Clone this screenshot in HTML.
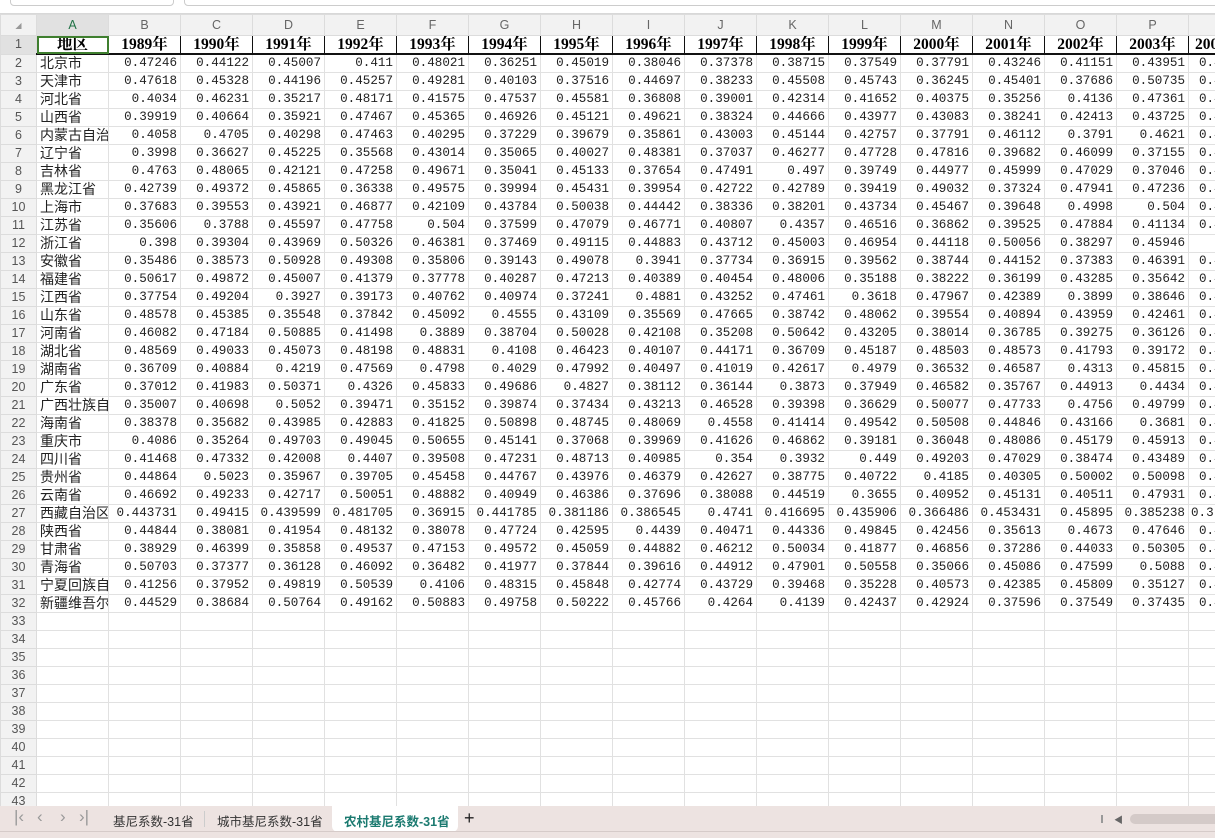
<!DOCTYPE html>
<html><head><meta charset="utf-8"><style>
*{margin:0;padding:0;box-sizing:border-box}
body{width:1215px;height:838px;overflow:hidden;background:#fff;position:relative;font-family:"Liberation Sans","Noto Sans CJK SC",sans-serif}
.top{position:absolute;left:0;top:0;width:1215px;height:14px;background:#fff;border-bottom:1px solid #d8d8d8}
.box{position:absolute;top:-8px;height:14px;border:1px solid #ccc;border-radius:4px;background:#fff}
table{position:absolute;left:0;top:14px;border-collapse:collapse;table-layout:fixed;width:1260px}
td{height:18px;border:1px solid #e1e1e1;font-family:"Liberation Mono",monospace;font-size:12.6px;color:#222;text-align:right;padding:0 3px 0 0;white-space:nowrap;overflow:hidden;line-height:17px}
tr.h td{height:21px;background:#f2f2f2;color:#666;text-align:center;font-family:"Liberation Sans",sans-serif;font-size:12.5px;padding:0;border-color:#dcdcdc}
tr.h td.sel{background:#e1e1e1;color:#217346}
td.rh{background:#f2f2f2;color:#555;text-align:center;font-family:"Liberation Sans",sans-serif;font-size:12.5px;padding:0;border-color:#dcdcdc}
td.rh.sel{background:#e1e1e1}
td.n{text-align:left;font-family:"Liberation Sans","Noto Sans CJK SC",sans-serif;font-size:14px;padding:0 0 0 3px;overflow:hidden}
tr.r1 td{font-family:"Liberation Serif","Noto Serif CJK SC",serif;font-weight:bold;font-size:15.5px;text-align:center;color:#000;border-top:1px solid #e1e1e1;border-bottom:2px solid #111;border-right:1px solid #111;padding:0;line-height:17px}
tr.r1 td.rh{font-family:"Liberation Sans",sans-serif;font-weight:normal;font-size:12.5px;color:#555;border-right:1px solid #dcdcdc;border-bottom:1px solid #dcdcdc}
tr.r1 td.a{outline:2px solid #3f7f2f;outline-offset:-2px}
td.q{text-align:left;padding-left:10px}
.tabs{position:absolute;left:0;top:806px;width:1215px;height:26px;background:#ede3e1}
.bot{position:absolute;left:0;top:831px;width:1215px;height:7px;background:#ede3e1;border-top:1px solid #d6cbc9}
.t{position:absolute;top:5px;font-size:12.5px;color:#333;font-family:"Liberation Sans","Noto Sans CJK SC",sans-serif}
.nav{position:absolute;top:1px;color:#999;font-size:17px}
</style></head><body>
<div class="top"><div class="box" style="left:10px;width:164px"></div><div class="box" style="left:184px;width:1040px"></div></div>
<table>
<colgroup><col style="width:36px"><col style="width:72px"><col style="width:72px"><col style="width:72px"><col style="width:72px"><col style="width:72px"><col style="width:72px"><col style="width:72px"><col style="width:72px"><col style="width:72px"><col style="width:72px"><col style="width:72px"><col style="width:72px"><col style="width:72px"><col style="width:72px"><col style="width:72px"><col style="width:72px"><col style="width:72px"></colgroup>
<tr class="h"><td style="color:#999;font-size:8px">◢</td><td class="sel">A</td><td>B</td><td>C</td><td>D</td><td>E</td><td>F</td><td>G</td><td>H</td><td>I</td><td>J</td><td>K</td><td>L</td><td>M</td><td>N</td><td>O</td><td>P</td><td>Q</td></tr>
<tr class="r1"><td class="rh sel">1</td><td class="a">地区</td><td>1989年</td><td>1990年</td><td>1991年</td><td>1992年</td><td>1993年</td><td>1994年</td><td>1995年</td><td>1996年</td><td>1997年</td><td>1998年</td><td>1999年</td><td>2000年</td><td>2001年</td><td>2002年</td><td>2003年</td><td style="text-align:left;padding-left:6px">2004年</td></tr>
<tr><td class="rh">2</td><td class="n">北京市</td><td>0.47246</td><td>0.44122</td><td>0.45007</td><td>0.411</td><td>0.48021</td><td>0.36251</td><td>0.45019</td><td>0.38046</td><td>0.37378</td><td>0.38715</td><td>0.37549</td><td>0.37791</td><td>0.43246</td><td>0.41151</td><td>0.43951</td><td class="q">0.41</td></tr>
<tr><td class="rh">3</td><td class="n">天津市</td><td>0.47618</td><td>0.45328</td><td>0.44196</td><td>0.45257</td><td>0.49281</td><td>0.40103</td><td>0.37516</td><td>0.44697</td><td>0.38233</td><td>0.45508</td><td>0.45743</td><td>0.36245</td><td>0.45401</td><td>0.37686</td><td>0.50735</td><td class="q">0.41</td></tr>
<tr><td class="rh">4</td><td class="n">河北省</td><td>0.4034</td><td>0.46231</td><td>0.35217</td><td>0.48171</td><td>0.41575</td><td>0.47537</td><td>0.45581</td><td>0.36808</td><td>0.39001</td><td>0.42314</td><td>0.41652</td><td>0.40375</td><td>0.35256</td><td>0.4136</td><td>0.47361</td><td class="q">0.41</td></tr>
<tr><td class="rh">5</td><td class="n">山西省</td><td>0.39919</td><td>0.40664</td><td>0.35921</td><td>0.47467</td><td>0.45365</td><td>0.46926</td><td>0.45121</td><td>0.49621</td><td>0.38324</td><td>0.44666</td><td>0.43977</td><td>0.43083</td><td>0.38241</td><td>0.42413</td><td>0.43725</td><td class="q">0.41</td></tr>
<tr><td class="rh">6</td><td class="n">内蒙古自治</td><td>0.4058</td><td>0.4705</td><td>0.40298</td><td>0.47463</td><td>0.40295</td><td>0.37229</td><td>0.39679</td><td>0.35861</td><td>0.43003</td><td>0.45144</td><td>0.42757</td><td>0.37791</td><td>0.46112</td><td>0.3791</td><td>0.4621</td><td class="q">0.41</td></tr>
<tr><td class="rh">7</td><td class="n">辽宁省</td><td>0.3998</td><td>0.36627</td><td>0.45225</td><td>0.35568</td><td>0.43014</td><td>0.35065</td><td>0.40027</td><td>0.48381</td><td>0.37037</td><td>0.46277</td><td>0.47728</td><td>0.47816</td><td>0.39682</td><td>0.46099</td><td>0.37155</td><td class="q">0.41</td></tr>
<tr><td class="rh">8</td><td class="n">吉林省</td><td>0.4763</td><td>0.48065</td><td>0.42121</td><td>0.47258</td><td>0.49671</td><td>0.35041</td><td>0.45133</td><td>0.37654</td><td>0.47491</td><td>0.497</td><td>0.39749</td><td>0.44977</td><td>0.45999</td><td>0.47029</td><td>0.37046</td><td class="q">0.41</td></tr>
<tr><td class="rh">9</td><td class="n">黑龙江省</td><td>0.42739</td><td>0.49372</td><td>0.45865</td><td>0.36338</td><td>0.49575</td><td>0.39994</td><td>0.45431</td><td>0.39954</td><td>0.42722</td><td>0.42789</td><td>0.39419</td><td>0.49032</td><td>0.37324</td><td>0.47941</td><td>0.47236</td><td class="q">0.41</td></tr>
<tr><td class="rh">10</td><td class="n">上海市</td><td>0.37683</td><td>0.39553</td><td>0.43921</td><td>0.46877</td><td>0.42109</td><td>0.43784</td><td>0.50038</td><td>0.44442</td><td>0.38336</td><td>0.38201</td><td>0.43734</td><td>0.45467</td><td>0.39648</td><td>0.4998</td><td>0.504</td><td class="q">0.41</td></tr>
<tr><td class="rh">11</td><td class="n">江苏省</td><td>0.35606</td><td>0.3788</td><td>0.45597</td><td>0.47758</td><td>0.504</td><td>0.37599</td><td>0.47079</td><td>0.46771</td><td>0.40807</td><td>0.4357</td><td>0.46516</td><td>0.36862</td><td>0.39525</td><td>0.47884</td><td>0.41134</td><td class="q">0.41</td></tr>
<tr><td class="rh">12</td><td class="n">浙江省</td><td>0.398</td><td>0.39304</td><td>0.43969</td><td>0.50326</td><td>0.46381</td><td>0.37469</td><td>0.49115</td><td>0.44883</td><td>0.43712</td><td>0.45003</td><td>0.46954</td><td>0.44118</td><td>0.50056</td><td>0.38297</td><td>0.45946</td><td class="q">&nbsp;&nbsp;&nbsp;0</td></tr>
<tr><td class="rh">13</td><td class="n">安徽省</td><td>0.35486</td><td>0.38573</td><td>0.50928</td><td>0.49308</td><td>0.35806</td><td>0.39143</td><td>0.49078</td><td>0.3941</td><td>0.37734</td><td>0.36915</td><td>0.39562</td><td>0.38744</td><td>0.44152</td><td>0.37383</td><td>0.46391</td><td class="q">0.41</td></tr>
<tr><td class="rh">14</td><td class="n">福建省</td><td>0.50617</td><td>0.49872</td><td>0.45007</td><td>0.41379</td><td>0.37778</td><td>0.40287</td><td>0.47213</td><td>0.40389</td><td>0.40454</td><td>0.48006</td><td>0.35188</td><td>0.38222</td><td>0.36199</td><td>0.43285</td><td>0.35642</td><td class="q">0.41</td></tr>
<tr><td class="rh">15</td><td class="n">江西省</td><td>0.37754</td><td>0.49204</td><td>0.3927</td><td>0.39173</td><td>0.40762</td><td>0.40974</td><td>0.37241</td><td>0.4881</td><td>0.43252</td><td>0.47461</td><td>0.3618</td><td>0.47967</td><td>0.42389</td><td>0.3899</td><td>0.38646</td><td class="q">0.41</td></tr>
<tr><td class="rh">16</td><td class="n">山东省</td><td>0.48578</td><td>0.45385</td><td>0.35548</td><td>0.37842</td><td>0.45092</td><td>0.4555</td><td>0.43109</td><td>0.35569</td><td>0.47665</td><td>0.38742</td><td>0.48062</td><td>0.39554</td><td>0.40894</td><td>0.43959</td><td>0.42461</td><td class="q">0.41</td></tr>
<tr><td class="rh">17</td><td class="n">河南省</td><td>0.46082</td><td>0.47184</td><td>0.50885</td><td>0.41498</td><td>0.3889</td><td>0.38704</td><td>0.50028</td><td>0.42108</td><td>0.35208</td><td>0.50642</td><td>0.43205</td><td>0.38014</td><td>0.36785</td><td>0.39275</td><td>0.36126</td><td class="q">0.41</td></tr>
<tr><td class="rh">18</td><td class="n">湖北省</td><td>0.48569</td><td>0.49033</td><td>0.45073</td><td>0.48198</td><td>0.48831</td><td>0.4108</td><td>0.46423</td><td>0.40107</td><td>0.44171</td><td>0.36709</td><td>0.45187</td><td>0.48503</td><td>0.48573</td><td>0.41793</td><td>0.39172</td><td class="q">0.41</td></tr>
<tr><td class="rh">19</td><td class="n">湖南省</td><td>0.36709</td><td>0.40884</td><td>0.4219</td><td>0.47569</td><td>0.4798</td><td>0.4029</td><td>0.47992</td><td>0.40497</td><td>0.41019</td><td>0.42617</td><td>0.4979</td><td>0.36532</td><td>0.46587</td><td>0.4313</td><td>0.45815</td><td class="q">0.41</td></tr>
<tr><td class="rh">20</td><td class="n">广东省</td><td>0.37012</td><td>0.41983</td><td>0.50371</td><td>0.4326</td><td>0.45833</td><td>0.49686</td><td>0.4827</td><td>0.38112</td><td>0.36144</td><td>0.3873</td><td>0.37949</td><td>0.46582</td><td>0.35767</td><td>0.44913</td><td>0.4434</td><td class="q">0.41</td></tr>
<tr><td class="rh">21</td><td class="n">广西壮族自</td><td>0.35007</td><td>0.40698</td><td>0.5052</td><td>0.39471</td><td>0.35152</td><td>0.39874</td><td>0.37434</td><td>0.43213</td><td>0.46528</td><td>0.39398</td><td>0.36629</td><td>0.50077</td><td>0.47733</td><td>0.4756</td><td>0.49799</td><td class="q">0.41</td></tr>
<tr><td class="rh">22</td><td class="n">海南省</td><td>0.38378</td><td>0.35682</td><td>0.43985</td><td>0.42883</td><td>0.41825</td><td>0.50898</td><td>0.48745</td><td>0.48069</td><td>0.4558</td><td>0.41414</td><td>0.49542</td><td>0.50508</td><td>0.44846</td><td>0.43166</td><td>0.3681</td><td class="q">0.41</td></tr>
<tr><td class="rh">23</td><td class="n">重庆市</td><td>0.4086</td><td>0.35264</td><td>0.49703</td><td>0.49045</td><td>0.50655</td><td>0.45141</td><td>0.37068</td><td>0.39969</td><td>0.41626</td><td>0.46862</td><td>0.39181</td><td>0.36048</td><td>0.48086</td><td>0.45179</td><td>0.45913</td><td class="q">0.41</td></tr>
<tr><td class="rh">24</td><td class="n">四川省</td><td>0.41468</td><td>0.47332</td><td>0.42008</td><td>0.4407</td><td>0.39508</td><td>0.47231</td><td>0.48713</td><td>0.40985</td><td>0.354</td><td>0.3932</td><td>0.449</td><td>0.49203</td><td>0.47029</td><td>0.38474</td><td>0.43489</td><td class="q">0.41</td></tr>
<tr><td class="rh">25</td><td class="n">贵州省</td><td>0.44864</td><td>0.5023</td><td>0.35967</td><td>0.39705</td><td>0.45458</td><td>0.44767</td><td>0.43976</td><td>0.46379</td><td>0.42627</td><td>0.38775</td><td>0.40722</td><td>0.4185</td><td>0.40305</td><td>0.50002</td><td>0.50098</td><td class="q">0.41</td></tr>
<tr><td class="rh">26</td><td class="n">云南省</td><td>0.46692</td><td>0.49233</td><td>0.42717</td><td>0.50051</td><td>0.48882</td><td>0.40949</td><td>0.46386</td><td>0.37696</td><td>0.38088</td><td>0.44519</td><td>0.3655</td><td>0.40952</td><td>0.45131</td><td>0.40511</td><td>0.47931</td><td class="q">0.41</td></tr>
<tr><td class="rh">27</td><td class="n">西藏自治区</td><td>0.443731</td><td>0.49415</td><td>0.439599</td><td>0.481705</td><td>0.36915</td><td>0.441785</td><td>0.381186</td><td>0.386545</td><td>0.4741</td><td>0.416695</td><td>0.435906</td><td>0.366486</td><td>0.453431</td><td>0.45895</td><td>0.385238</td><td style="text-align:left;padding-left:2px">0.3</td></tr>
<tr><td class="rh">28</td><td class="n">陕西省</td><td>0.44844</td><td>0.38081</td><td>0.41954</td><td>0.48132</td><td>0.38078</td><td>0.47724</td><td>0.42595</td><td>0.4439</td><td>0.40471</td><td>0.44336</td><td>0.49845</td><td>0.42456</td><td>0.35613</td><td>0.4673</td><td>0.47646</td><td class="q">0.41</td></tr>
<tr><td class="rh">29</td><td class="n">甘肃省</td><td>0.38929</td><td>0.46399</td><td>0.35858</td><td>0.49537</td><td>0.47153</td><td>0.49572</td><td>0.45059</td><td>0.44882</td><td>0.46212</td><td>0.50034</td><td>0.41877</td><td>0.46856</td><td>0.37286</td><td>0.44033</td><td>0.50305</td><td class="q">0.41</td></tr>
<tr><td class="rh">30</td><td class="n">青海省</td><td>0.50703</td><td>0.37377</td><td>0.36128</td><td>0.46092</td><td>0.36482</td><td>0.41977</td><td>0.37844</td><td>0.39616</td><td>0.44912</td><td>0.47901</td><td>0.50558</td><td>0.35066</td><td>0.45086</td><td>0.47599</td><td>0.5088</td><td class="q">0.41</td></tr>
<tr><td class="rh">31</td><td class="n">宁夏回族自</td><td>0.41256</td><td>0.37952</td><td>0.49819</td><td>0.50539</td><td>0.4106</td><td>0.48315</td><td>0.45848</td><td>0.42774</td><td>0.43729</td><td>0.39468</td><td>0.35228</td><td>0.40573</td><td>0.42385</td><td>0.45809</td><td>0.35127</td><td class="q">0.41</td></tr>
<tr><td class="rh">32</td><td class="n">新疆维吾尔</td><td>0.44529</td><td>0.38684</td><td>0.50764</td><td>0.49162</td><td>0.50883</td><td>0.49758</td><td>0.50222</td><td>0.45766</td><td>0.4264</td><td>0.4139</td><td>0.42437</td><td>0.42924</td><td>0.37596</td><td>0.37549</td><td>0.37435</td><td class="q">0.41</td></tr>
<tr><td class="rh">33</td><td></td><td></td><td></td><td></td><td></td><td></td><td></td><td></td><td></td><td></td><td></td><td></td><td></td><td></td><td></td><td></td><td></td></tr>
<tr><td class="rh">34</td><td></td><td></td><td></td><td></td><td></td><td></td><td></td><td></td><td></td><td></td><td></td><td></td><td></td><td></td><td></td><td></td><td></td></tr>
<tr><td class="rh">35</td><td></td><td></td><td></td><td></td><td></td><td></td><td></td><td></td><td></td><td></td><td></td><td></td><td></td><td></td><td></td><td></td><td></td></tr>
<tr><td class="rh">36</td><td></td><td></td><td></td><td></td><td></td><td></td><td></td><td></td><td></td><td></td><td></td><td></td><td></td><td></td><td></td><td></td><td></td></tr>
<tr><td class="rh">37</td><td></td><td></td><td></td><td></td><td></td><td></td><td></td><td></td><td></td><td></td><td></td><td></td><td></td><td></td><td></td><td></td><td></td></tr>
<tr><td class="rh">38</td><td></td><td></td><td></td><td></td><td></td><td></td><td></td><td></td><td></td><td></td><td></td><td></td><td></td><td></td><td></td><td></td><td></td></tr>
<tr><td class="rh">39</td><td></td><td></td><td></td><td></td><td></td><td></td><td></td><td></td><td></td><td></td><td></td><td></td><td></td><td></td><td></td><td></td><td></td></tr>
<tr><td class="rh">40</td><td></td><td></td><td></td><td></td><td></td><td></td><td></td><td></td><td></td><td></td><td></td><td></td><td></td><td></td><td></td><td></td><td></td></tr>
<tr><td class="rh">41</td><td></td><td></td><td></td><td></td><td></td><td></td><td></td><td></td><td></td><td></td><td></td><td></td><td></td><td></td><td></td><td></td><td></td></tr>
<tr><td class="rh">42</td><td></td><td></td><td></td><td></td><td></td><td></td><td></td><td></td><td></td><td></td><td></td><td></td><td></td><td></td><td></td><td></td><td></td></tr>
<tr><td class="rh">43</td><td></td><td></td><td></td><td></td><td></td><td></td><td></td><td></td><td></td><td></td><td></td><td></td><td></td><td></td><td></td><td></td><td></td></tr>
</table>
<div class="tabs">
<span class="nav" style="left:14px">|‹</span><span class="nav" style="left:37px">‹</span><span class="nav" style="left:60px">›</span><span class="nav" style="left:79px">›|</span>
<span class="t" style="left:113px">基尼系数-31省</span>
<div style="position:absolute;left:204px;top:5px;width:1px;height:16px;background:#ccc"></div>
<span class="t" style="left:217px">城市基尼系数-31省</span>
<div style="position:absolute;left:332px;top:0;width:126px;height:26px;background:#fff;border-radius:0 0 6px 6px"></div>
<span class="t" style="left:344px;color:#1b7a70;font-weight:bold">农村基尼系数-31省</span>
<span class="t" style="left:464px;top:2px;font-size:18px;color:#222">+</span>
<div style="position:absolute;left:1101px;top:9px;width:2px;height:8px;background:#999"></div>
<span style="position:absolute;left:1114px;top:7px;font-size:9px;color:#666">◀</span>
<div style="position:absolute;left:1130px;top:8px;width:95px;height:10px;background:#d4cac8;border-radius:5px"></div>
</div>
<div class="bot"></div>
</body></html>
